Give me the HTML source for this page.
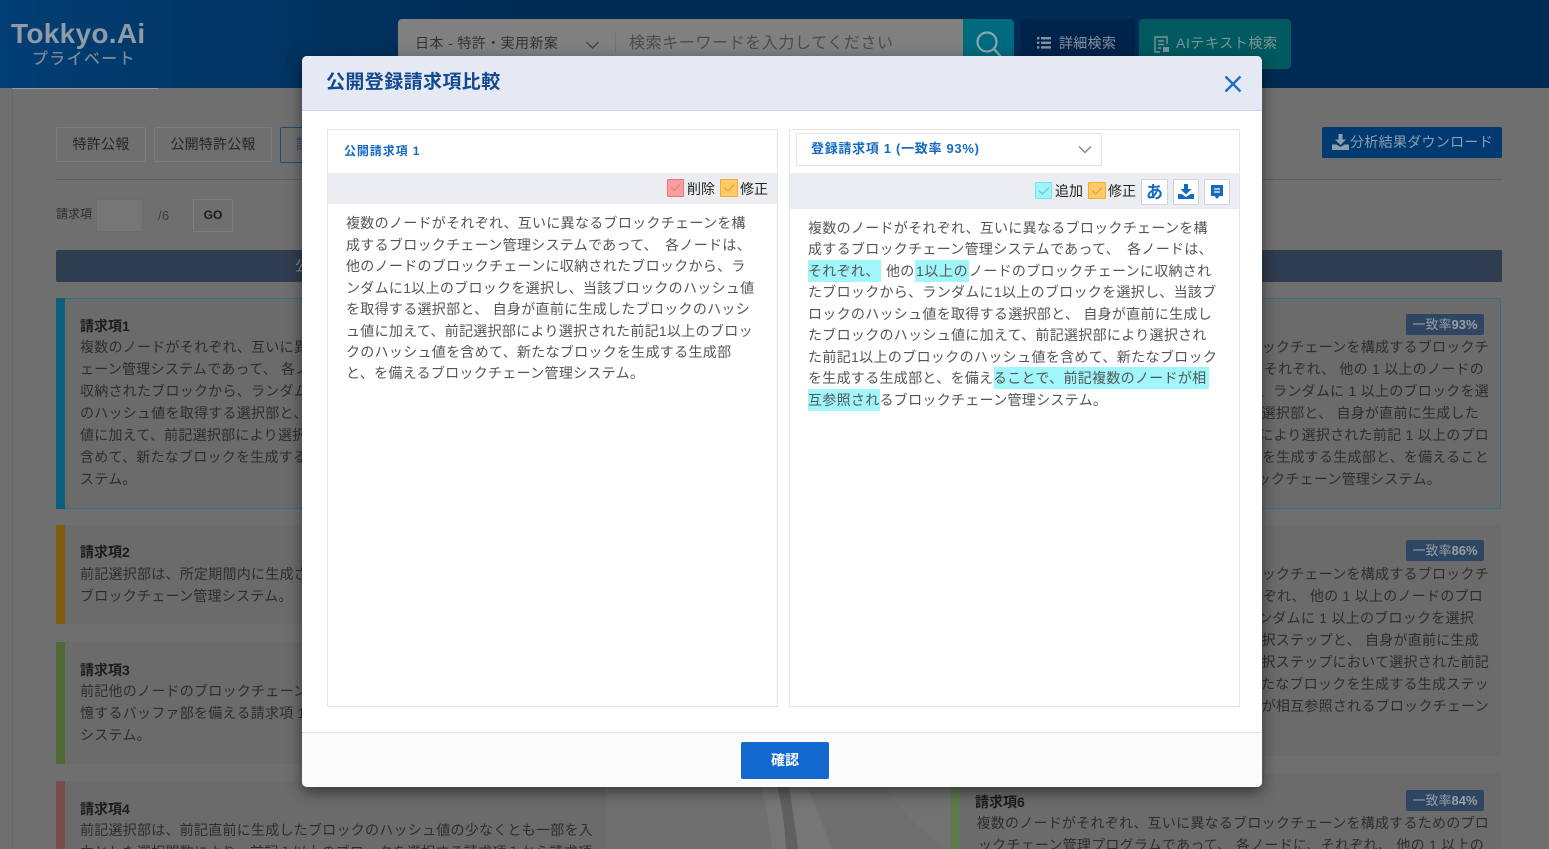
<!DOCTYPE html>
<html lang="ja"><head><meta charset="utf-8"><title>公開登録請求項比較</title>
<style>
html,body{margin:0;padding:0;width:1549px;height:849px;overflow:hidden;background:#6f6f6f}
body{position:relative;font-family:"Liberation Sans","Noto Sans CJK JP",sans-serif;color:#2e2e2e}
.a{position:absolute}
.l{position:absolute;white-space:nowrap;font-size:14px;line-height:22px;height:22px;letter-spacing:.25px;color:#2d2d2d}
.r{text-align:right}
.t{font-weight:700;color:#1c1c1c;letter-spacing:0}
.b{position:absolute;left:1406px;width:78px;height:21px;background:#2f4662;border-radius:2px;color:#9a9fa6;font-size:13px;line-height:21px;text-align:center;white-space:nowrap}
.c{position:absolute;background:#6b6b6b}
.s{position:absolute;width:9px}
.m{position:absolute;white-space:nowrap;font-size:14px;line-height:22px;height:22px;letter-spacing:.3px;color:#555}
.tab{position:absolute;top:127px;height:35px;border:1px solid #7c7c7c;background:#6f6f6f;border-radius:2px;box-sizing:border-box;font-size:14px;line-height:33px;text-align:center;color:#262626}
.cb{position:absolute;width:16px;height:16px;border-radius:1px;box-sizing:border-box}
.lg{position:absolute;font-size:14px;line-height:20px;color:#222;white-space:nowrap}
.ib{position:absolute;top:179px;height:26px;width:26px;box-sizing:border-box;background:#fff;border:1px solid #ccd6e0;border-radius:2px}
</style></head><body>

<!-- header -->
<div class="a" style="left:0;top:0;width:1549px;height:88px;background:linear-gradient(90deg,#023f75 0,#013767 180px,#002c54 520px,#002b52 100%)"></div>
<div class="l" style="left:11px;top:18px;height:32px;font-size:28px;line-height:32px;color:#8f9ba6;font-weight:700;letter-spacing:.3px">Tokkyo.Ai</div>
<div class="l" style="left:32px;top:49px;font-size:16px;color:#76899b;letter-spacing:1.3px;font-weight:500">プライベート</div>
<div class="a" style="left:398px;top:19px;width:565px;height:50px;background:#808080;border-radius:4px 0 0 4px"></div>
<div class="l" style="left:415px;top:32px;font-size:14px;color:#333;letter-spacing:.4px">日本 - 特許・実用新案</div>
<svg class="a" style="left:585px;top:40px" width="15" height="10"><path d="M1.5 2L7.5 8L13.5 2" fill="none" stroke="#444" stroke-width="1.4"/></svg>
<div class="a" style="left:615px;top:33px;width:1px;height:20px;background:#737373"></div>
<div class="l" style="left:629px;top:33px;font-size:16px;color:#4c4c4c;letter-spacing:.6px">検索キーワードを入力してください</div>
<div class="a" style="left:963px;top:19px;width:51px;height:50px;background:#006a7e;border-radius:0 4px 4px 0"></div>
<svg class="a" style="left:974px;top:30px" width="30" height="30"><circle cx="13" cy="12" r="9.5" fill="none" stroke="#8aa6ae" stroke-width="2.2"/><path d="M20 19L28 28" stroke="#8aa6ae" stroke-width="2.4"/></svg>
<div class="a" style="left:1020px;top:19px;width:115px;height:50px;background:#00234a;border-radius:4px"></div>
<svg class="a" style="left:1037px;top:37px" width="15" height="12" fill="#8592a0"><rect x="0" y="0" width="2.4" height="2.4"/><rect x="0" y="4.6" width="2.4" height="2.4"/><rect x="0" y="9.2" width="2.4" height="2.4"/><rect x="4" y="0" width="10" height="2.4"/><rect x="4" y="4.6" width="10" height="2.4"/><rect x="4" y="9.2" width="10" height="2.4"/></svg>
<div class="l" style="left:1059px;top:32px;font-size:14px;color:#8592a0;letter-spacing:.3px">詳細検索</div>
<div class="a" style="left:1139px;top:19px;width:152px;height:50px;background:#005a60;border-radius:4px"></div>
<svg class="a" style="left:1153px;top:35px" width="18" height="19" fill="none" stroke="#7b9598" stroke-width="1.4"><path d="M14 9V2H2V17H7"/><path d="M5 6H11M5 9.5H11M5 13H8"/><rect x="10" y="12" width="6" height="5" fill="#7b9598" stroke="none"/></svg>
<div class="l" style="left:1176px;top:32px;font-size:14px;color:#7b9598;letter-spacing:.6px">AIテキスト検索</div>

<!-- page bg -->
<div class="a" style="left:12px;top:88px;width:1px;height:761px;background:#676767"></div>
<div class="a" style="left:12px;top:88px;width:146px;height:1px;background:#9a9a9a"></div>

<div class="tab" style="left:56px;width:90px;letter-spacing:.25px">特許公報</div>
<div class="tab" style="left:154px;width:118px;letter-spacing:.2px">公開特許公報</div>
<div class="a" style="left:280px;top:127px;width:40px;height:36px;border:1px solid #1f4a78;box-sizing:border-box;border-radius:2px"></div>
<div class="l" style="left:296px;top:133px;color:#2a4c70;font-size:14px">請</div>
<div class="a" style="left:1322px;top:127px;width:180px;height:31px;background:#003a70;border-radius:2px"></div>
<svg class="a" style="left:1332px;top:134px" width="17" height="16" fill="#8d9eae"><path d="M6.5 0H10.5V5.5H14L8.5 11L3 5.5H6.5Z"/><path d="M0 10.5H4.5L8.5 13L12.5 10.5H17V16H0Z"/></svg>
<div class="l" style="left:1350px;top:131px;font-size:14px;color:#8d9eae;letter-spacing:.3px">分析結果ダウンロード</div>
<div class="a" style="left:56px;top:179px;width:1446px;height:1px;background:#5e5e5e"></div>

<div class="l" style="left:56px;top:203px;font-size:12px;letter-spacing:0;color:#2a2a2a">請求項</div>
<div class="a" style="left:96px;top:199px;width:47px;height:33px;background:#767676;border:1px solid #6c6c6c;box-sizing:border-box"></div>
<div class="l" style="left:158px;top:205px;font-size:13px;color:#3c3c3c">/6</div>
<div class="a" style="left:193px;top:199px;width:40px;height:33px;border:1px solid #7c7c7c;box-sizing:border-box;font-size:12px;font-weight:700;line-height:31px;text-align:center;color:#1a1a1a">GO</div>

<div class="a" style="left:56px;top:250px;width:1446px;height:32px;background:#2f3d50;border-radius:2px"></div>
<div class="l" style="left:295px;top:255px;font-size:14px;color:#8d949e">公</div>

<!-- decoration -->
<svg class="a" style="left:600px;top:780px" width="360" height="69"><path d="M158 0H205C215 25 225 50 232 69H172C170 45 165 20 158 0Z" fill="#767676"/><path d="M176 0H188C192 25 196 50 198 69H186C185 45 181 20 176 0Z" fill="#606060"/><path d="M280 0H350V69H345C320 50 295 25 280 0Z" fill="#727272"/></svg>

<!-- left cards -->
<div class="c" style="left:56px;top:298px;width:550px;height:211px;border:1px solid #2f7186;box-sizing:border-box"></div>
<div class="s" style="left:56px;top:298px;height:211px;background:#0a5f7b"></div>
<div class="c" style="left:56px;top:525px;width:550px;height:99px"></div>
<div class="s" style="left:56px;top:525px;height:99px;background:#7f5d0c"></div>
<div class="c" style="left:56px;top:642px;width:550px;height:122px"></div>
<div class="s" style="left:56px;top:642px;height:122px;background:#4f6a36"></div>
<div class="c" style="left:56px;top:781px;width:550px;height:68px"></div>
<div class="s" style="left:56px;top:781px;height:68px;background:#7a4b4b"></div>

<div class="l t" style="left:80px;top:315px">請求項1</div>
<div class="l" style="left:80px;top:336px">複数のノードがそれぞれ、互いに異なるブロック</div>
<div class="l" style="left:80px;top:358px">ェーン管理システムであって、 各ノードは</div>
<div class="l" style="left:80px;top:380px">収納されたブロックから、ランダムに</div>
<div class="l" style="left:80px;top:402px">のハッシュ値を取得する選択部と、 自身が</div>
<div class="l" style="left:80px;top:424px">値に加えて、前記選択部により選択された</div>
<div class="l" style="left:80px;top:446px">含めて、新たなブロックを生成する生成部</div>
<div class="l" style="left:80px;top:468px">ステム。</div>

<div class="l t" style="left:80px;top:541px">請求項2</div>
<div class="l" style="left:80px;top:563px">前記選択部は、所定期間内に生成されたブロック</div>
<div class="l" style="left:80px;top:585px">ブロックチェーン管理システム。</div>

<div class="l t" style="left:80px;top:659px">請求項3</div>
<div class="l" style="left:80px;top:680px">前記他のノードのブロックチェーンに収納</div>
<div class="l" style="left:80px;top:702px">憶するバッファ部を備える請求項 1 から</div>
<div class="l" style="left:80px;top:724px">システム。</div>

<div class="l t" style="left:80px;top:798px">請求項4</div>
<div class="l" style="left:80px;top:819px">前記選択部は、前記直前に生成したブロックのハッシュ値の少なくとも一部を入</div>
<div class="l" style="left:80px;top:841px">力とした選択関数により、前記１以上のブロックを選択する請求項１から請求項</div>

<!-- right cards -->
<div class="c" style="left:951px;top:298px;width:550px;height:211px;border:1px solid #2f7186;box-sizing:border-box"></div>
<div class="c" style="left:951px;top:525px;width:550px;height:231px"></div>
<div class="c" style="left:951px;top:773px;width:550px;height:76px"></div>
<div class="s" style="left:951px;top:781px;height:68px;background:#5f7a4c"></div>

<div class="b" style="top:314px">一致率<b>93%</b></div>
<div class="l r" style="right:60px;top:336px">ックチェーンを構成するブロックチ</div>
<div class="l r" style="right:65px;top:358px">それぞれ、 他の 1 以上のノードの</div>
<div class="l r" style="right:60px;top:380px">、ランダムに 1 以上のブロックを選</div>
<div class="l r" style="right:70px;top:402px">選択部と、 自身が直前に生成した</div>
<div class="l r" style="right:60px;top:424px">により選択された前記 1 以上のプロ</div>
<div class="l r" style="right:60px;top:446px">を生成する生成部と、を備えること</div>
<div class="l r" style="right:108px;top:468px">ックチェーン管理システム。</div>

<div class="b" style="top:540px">一致率<b>86%</b></div>
<div class="l r" style="right:60px;top:563px">ックチェーンを構成するブロックチ</div>
<div class="l r" style="right:66px;top:585px">れぞれ、 他の 1 以上のノードのプロ</div>
<div class="l r" style="right:75px;top:607px">ンダムに 1 以上のブロックを選択</div>
<div class="l r" style="right:70px;top:629px">択ステップと、 自身が直前に生成</div>
<div class="l r" style="right:60px;top:651px">択ステップにおいて選択された前記</div>
<div class="l r" style="right:60px;top:673px">たなブロックを生成する生成ステッ</div>
<div class="l r" style="right:60px;top:695px">が相互参照されるブロックチェーン</div>

<div class="b" style="top:790px">一致率<b>84%</b></div>
<div class="l t" style="left:975px;top:791px">請求項6</div>
<div class="l r" style="right:60px;top:812px">複数のノードがそれぞれ、互いに異なるブロックチェーンを構成するためのプロ</div>
<div class="l r" style="right:65px;top:834px">ックチェーン管理プログラムであって、 各ノードに、それぞれ、 他の 1 以上の</div>

<!-- modal -->
<div class="a" style="left:302px;top:56px;width:960px;height:731px;background:#fff;border-radius:5px;box-shadow:0 5px 15px rgba(0,0,0,.5);overflow:hidden">
  <div class="a" style="left:0;top:0;width:960px;height:54px;background:#e4e9f4;border-bottom:1px solid #ccd3e3"></div>
  <div class="a" style="left:0;top:676px;width:960px;height:55px;background:#fbfbfb;border-top:1px solid #e3e3e3;box-sizing:border-box"></div>
</div>
<div class="l" style="left:326px;top:69px;height:28px;font-size:19px;line-height:28px;font-weight:700;color:#14488f;letter-spacing:.4px">公開登録請求項比較</div>
<svg class="a" style="left:1224px;top:75px" width="18" height="18"><path d="M1.5 1.5L16.5 16.5M16.5 1.5L1.5 16.5" stroke="#1f6dc4" stroke-width="2.4"/></svg>

<!-- left panel -->
<div class="a" style="left:327px;top:129px;width:451px;height:578px;border:1px solid #e6e6e6;box-sizing:border-box;background:#fff"></div>
<div class="a" style="left:328px;top:173px;width:449px;height:31px;background:#ebedf0"></div>
<div class="l" style="left:344px;top:140px;font-size:12px;font-weight:700;color:#1569c0;letter-spacing:.9px">公開請求項 1</div>
<div class="cb" style="left:667px;top:179px;width:17px;height:18px;background:#fb9ea4;border:1px solid #f0727c"></div>
<svg class="a" style="left:670px;top:183px" width="11" height="9"><path d="M1 4L4.5 7.5L10 1.5" fill="none" stroke="#ee7f88" stroke-width="1.4"/></svg>
<div class="lg" style="left:687px;top:179px">削除</div>
<div class="cb" style="left:720px;top:179px;width:18px;height:18px;background:#fecb6a;border:1px solid #f5ac2e"></div>
<svg class="a" style="left:723px;top:183px" width="12" height="10"><path d="M1 4.5L5 8L11 1.5" fill="none" stroke="#f0a52b" stroke-width="1.4"/></svg>
<div class="lg" style="left:740px;top:179px">修正</div>

<div class="m" style="left:346px;top:212px">複数のノードがそれぞれ、互いに異なるブロックチェーンを構</div>
<div class="m" style="left:346px;top:234px;word-spacing:3px">成するブロックチェーン管理システムであって、 各ノードは、</div>
<div class="m" style="left:346px;top:255px">他のノードのブロックチェーンに収納されたブロックから、ラ</div>
<div class="m" style="left:346px;top:277px">ンダムに1以上のブロックを選択し、当該ブロックのハッシュ値</div>
<div class="m" style="left:346px;top:298px">を取得する選択部と、 自身が直前に生成したブロックのハッシ</div>
<div class="m" style="left:346px;top:320px">ュ値に加えて、前記選択部により選択された前記1以上のブロッ</div>
<div class="m" style="left:346px;top:341px">クのハッシュ値を含めて、新たなブロックを生成する生成部</div>
<div class="m" style="left:346px;top:362px">と、を備えるブロックチェーン管理システム。</div>

<!-- right panel -->
<div class="a" style="left:789px;top:129px;width:451px;height:578px;border:1px solid #e6e6e6;box-sizing:border-box;background:#fff"></div>
<div class="a" style="left:790px;top:173px;width:449px;height:36px;background:#ebedf0"></div>
<div class="a" style="left:796px;top:133px;width:306px;height:33px;border:1px solid #e2e2e2;box-sizing:border-box;background:#fff"></div>
<div class="l" style="left:811px;top:138px;font-size:13px;font-weight:700;color:#1569c0;letter-spacing:.7px">登録請求項 1 (一致率 93%)</div>
<svg class="a" style="left:1078px;top:145px" width="14" height="10"><path d="M1 1.5L7 7.5L13 1.5" fill="none" stroke="#8c8c8c" stroke-width="1.5"/></svg>

<div class="cb" style="left:1035px;top:182px;width:17px;height:17px;background:#a3f3fa;border:1px solid #72e6f0"></div>
<svg class="a" style="left:1038px;top:186px" width="12" height="10"><path d="M1 4.5L4.5 8L11 1.5" fill="none" stroke="#63cfd9" stroke-width="1.4"/></svg>
<div class="lg" style="left:1055px;top:181px">追加</div>
<div class="cb" style="left:1088px;top:182px;width:18px;height:17px;background:#fecb6a;border:1px solid #f5ac2e"></div>
<svg class="a" style="left:1091px;top:186px" width="12" height="10"><path d="M1 4.5L5 8L11 1.5" fill="none" stroke="#f0a52b" stroke-width="1.4"/></svg>
<div class="lg" style="left:1108px;top:181px">修正</div>
<div class="ib" style="left:1141px;width:27px;font-size:17px;line-height:26px;font-weight:700;text-align:center;color:#1569c0">あ</div>
<div class="ib" style="left:1173px"></div>
<svg class="a" style="left:1178px;top:184px" width="16" height="15" fill="#1569c0"><path d="M6 0H10V5H13.5L8 10.5L2.5 5H6Z"/><path d="M0 10H3.5L8 13L12.5 10H16V15H0Z"/></svg>
<div class="ib" style="left:1204px"></div>
<svg class="a" style="left:1210px;top:185px" width="14" height="15"><path d="M1 0H13V11H9.5L7 14L4.5 11H1Z" fill="#1569c0"/><path d="M4 4H10M4 7H10" stroke="#fff" stroke-width="1.3"/></svg>

<div class="a" style="left:808px;top:260px;width:73px;height:22px;background:#a0f6fb"></div>
<div class="a" style="left:915px;top:260px;width:54px;height:22px;background:#a0f6fb"></div>
<div class="a" style="left:994px;top:367px;width:215px;height:22px;background:#a0f6fb"></div>
<div class="a" style="left:808px;top:389px;width:72px;height:22px;background:#a0f6fb"></div>

<div class="m" style="left:808px;top:217px">複数のノードがそれぞれ、互いに異なるブロックチェーンを構</div>
<div class="m" style="left:808px;top:238px;word-spacing:3px">成するブロックチェーン管理システムであって、 各ノードは、</div>
<div class="m" style="left:808px;top:260px">それぞれ、</div>
<div class="m" style="left:886px;top:260px">他の</div>
<div class="m" style="left:916px;top:260px;letter-spacing:.6px">1以上の</div>
<div class="m" style="left:969px;top:260px">ノードのブロックチェーンに収納され</div>
<div class="m" style="left:808px;top:281px">たブロックから、ランダムに1以上のブロックを選択し、当該ブ</div>
<div class="m" style="left:808px;top:303px">ロックのハッシュ値を取得する選択部と、 自身が直前に生成し</div>
<div class="m" style="left:808px;top:324px">たブロックのハッシュ値に加えて、前記選択部により選択され</div>
<div class="m" style="left:808px;top:346px;letter-spacing:.35px">た前記1以上のブロックのハッシュ値を含めて、新たなブロック</div>
<div class="m" style="left:808px;top:367px">を生成する生成部と、を備えることで、前記複数のノードが相</div>
<div class="m" style="left:808px;top:389px">互参照されるブロックチェーン管理システム。</div>

<div class="a" style="left:741px;top:742px;width:88px;height:37px;background:#1268cf;border-radius:2px;color:#fff;font-size:14px;font-weight:700;line-height:37px;text-align:center">確認</div>
</body></html>
